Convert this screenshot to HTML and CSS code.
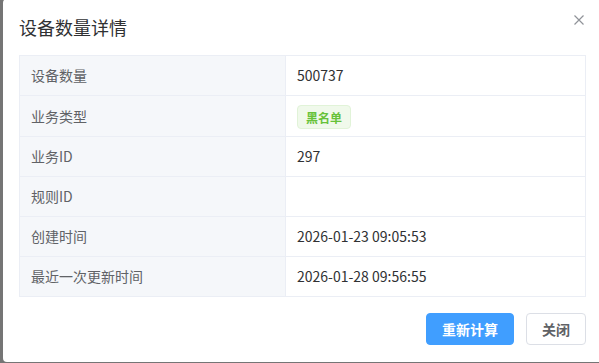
FILE: index.html
```html
<!DOCTYPE html>
<html lang="zh-CN">
<head>
  <meta charset="UTF-8">
  <title>设备数量详情</title>
  <link rel="stylesheet" href="styles.css">
</head>
<body>
  <div class="dialog">
    <div class="dialog-header">
      <span class="dialog-title">设备数量详情</span>
      <button class="dialog-close" aria-label="关闭">
        <svg viewBox="0 0 10 10" width="10" height="10">
          <path d="M0.5 0.5 L9.5 9.5 M9.5 0.5 L0.5 9.5" stroke="#909399" stroke-width="1.2" fill="none"/>
        </svg>
      </button>
    </div>

    <table class="details">
      <tbody>
        <tr>
          <th>设备数量</th>
          <td>500737</td>
        </tr>
        <tr>
          <th>业务类型</th>
          <td class="tag-cell"><span class="tag">黑名单</span></td>
        </tr>
        <tr>
          <th>业务ID</th>
          <td>297</td>
        </tr>
        <tr>
          <th>规则ID</th>
          <td></td>
        </tr>
        <tr>
          <th>创建时间</th>
          <td>2026-01-23 09:05:53</td>
        </tr>
        <tr>
          <th>最近一次更新时间</th>
          <td>2026-01-28 09:56:55</td>
        </tr>
      </tbody>
    </table>

    <div class="dialog-footer">
      <button class="btn btn-primary">重新计算</button>
      <button class="btn">关闭</button>
    </div>
  </div>
</body>
</html>
```

FILE: styles.css
```css
html, body {
  margin: 0;
  height: 100%;
  overflow: hidden;
}

body {
  background-color: #757575;
  font-family: "Noto Sans CJK SC", "Noto Sans", sans-serif;
  color: #606266;
}

.dialog {
  box-sizing: border-box;
  width: 599px;
  margin: -1px 0 0 3px;
  padding: 16px 16px 17px;
  background: #fff;
  border-radius: 4px;
}

.dialog-header {
  display: flex;
  justify-content: space-between;
  align-items: flex-start;
  height: 24px;
  margin-bottom: 16px;
}

.dialog-title {
  font-size: 18px;
  line-height: 24px;
  color: #303133;
}

.dialog-close {
  display: flex;
  align-items: center;
  justify-content: center;
  width: 24px;
  height: 24px;
  margin: -7px -5px 0 0;
  padding: 0;
  border: none;
  background: none;
  cursor: pointer;
}

.details {
  width: 100%;
  border-collapse: collapse;
  font-size: 14px;
  line-height: 23px;
}

.details th,
.details td {
  padding: 8px 11px;
  border: 1px solid #ebeef5;
  text-align: left;
  vertical-align: middle;
}

.details th {
  width: 243px;
  font-weight: normal;
  color: #606266;
  background-color: #f5f7fa;
}

.details td {
  color: #303133;
}

.details .tag-cell {
  padding-bottom: 7px;
}

.tag {
  display: inline-flex;
  align-items: center;
  height: 24px;
  padding: 0 8px;
  font-size: 12px;
  font-weight: 700;
  color: #67c23a;
  background-color: #f0f9eb;
  border: 1px solid #e1f3d8;
  border-radius: 4px;
  box-sizing: border-box;
  vertical-align: middle;
}

.dialog-footer {
  display: flex;
  justify-content: flex-end;
  gap: 12px;
  padding-top: 16px;
}

.btn {
  height: 32px;
  padding: 0 15px;
  font-family: inherit;
  font-size: 14px;
  font-weight: 700;
  color: #606266;
  background-color: #fff;
  border: 1px solid #dcdfe6;
  border-radius: 4px;
  cursor: pointer;
}

.btn-primary {
  color: #fff;
  background-color: #409eff;
  border-color: #409eff;
}
```
